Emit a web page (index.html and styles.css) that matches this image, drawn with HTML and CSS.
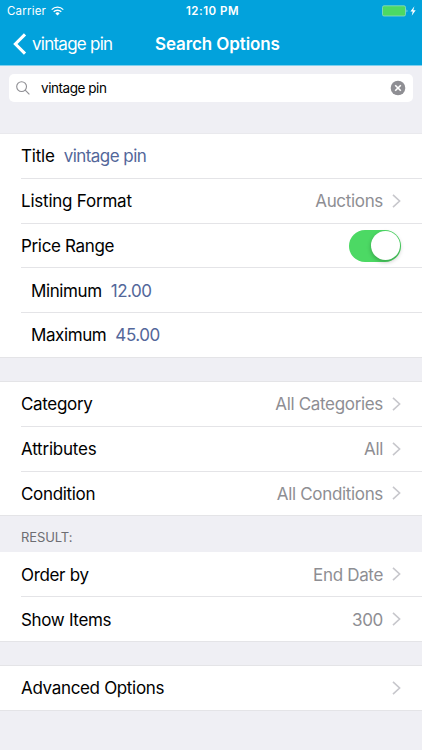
FILE: index.html
```html
<!DOCTYPE html>
<html lang="en">
<head>
    <meta charset="UTF-8">
    <meta name="viewport" content="width=device-width, initial-scale=1.0">
    <title>Search Options</title>
    <link rel="stylesheet" href="styles.css">
</head>
<body>
    <header class="header">
        <div class="status-bar">
            <div class="carrier">
                <span>Carrier</span>
                <svg class="wifi" width="13" height="10" viewBox="0 0 13 10" fill="none" stroke="#fff" stroke-width="1.3">
                    <path d="M0.7 3.6a8.2 8.2 0 0 1 11.6 0M2.7 5.8a5.4 5.4 0 0 1 7.6 0"/>
                    <path d="M6.5 9.5L4.4 7.4a3 3 0 0 1 4.2 0z" fill="#fff" stroke="none"/>
                </svg>
            </div>
            <div class="time">12:10 PM</div>
            <div class="power">
                <svg width="35" height="12" viewBox="0 0 35 12">
                    <rect x="0.5" y="0.8" width="23" height="10.2" rx="1.5" fill="#4cd964" stroke="#8fdcc0" stroke-width="0.8"/>
                    <path d="M24.7 4.2q1.5 1.6 0 3.4z" fill="#c9f0e0"/>
                    <path d="M32.4 1.2L28.4 6.5h2.3l-1 4.2 4-5.4h-2.4z" fill="#fff"/>
                </svg>
            </div>
        </div>
        <nav class="nav-bar">
            <a class="back">
                <svg width="14" height="22" viewBox="0 0 14 22" fill="none" stroke="#fff" stroke-width="3.1">
                    <path d="M12 1.4L2.4 11 12 20.6"/>
                </svg>
                <span>vintage pin</span>
            </a>
            <h1>Search Options</h1>
        </nav>
    </header>

    <div class="search">
        <div class="search-field">
            <svg width="14" height="14" viewBox="0 0 14 14" fill="none" stroke="#8e8e93" stroke-width="1.1">
                <circle cx="5.6" cy="5.6" r="4.9"/>
                <path d="M9.2 9.2l4.2 4.2"/>
            </svg>
            <span>vintage pin</span>
            <svg class="clear" width="16" height="16" viewBox="0 0 16 16">
                <circle cx="8" cy="8" r="7.3" fill="#8e8e93"/>
                <path d="M5.2 5.2l5.6 5.6M10.8 5.2l-5.6 5.6" stroke="#fff" stroke-width="1.6"/>
            </svg>
        </div>
    </div>

    <svg class="defs" width="0" height="0">
        <symbol id="chevron" viewBox="0 0 9 14">
            <path d="M1 0.8L7.6 7 1 13.2" fill="none" stroke="#c7c7cc" stroke-width="1.6"/>
        </symbol>
    </svg>

    <section class="group">
        <div class="row">
            <span class="label title">Title</span>
            <span class="input">vintage pin</span>
        </div>
        <div class="row">
            <span class="label format">Listing Format</span>
            <span class="value">Auctions</span>
            <svg class="chevron"><use href="#chevron"/></svg>
        </div>
        <div class="row">
            <span class="label">Price Range</span>
            <span class="switch"></span>
        </div>
        <div class="row sub">
            <span class="label">Minimum</span>
            <span class="input">12.00</span>
        </div>
        <div class="row sub">
            <span class="label">Maximum</span>
            <span class="input">45.00</span>
        </div>
    </section>

    <section class="group spaced">
        <div class="row">
            <span class="label">Category</span>
            <span class="value">All Categories</span>
            <svg class="chevron"><use href="#chevron"/></svg>
        </div>
        <div class="row">
            <span class="label format">Attributes</span>
            <span class="value">All</span>
            <svg class="chevron"><use href="#chevron"/></svg>
        </div>
        <div class="row">
            <span class="label">Condition</span>
            <span class="value">All Conditions</span>
            <svg class="chevron"><use href="#chevron"/></svg>
        </div>
    </section>

    <h2>RESULT:</h2>
    <section class="group">
        <div class="row">
            <span class="label">Order by</span>
            <span class="value">End Date</span>
            <svg class="chevron"><use href="#chevron"/></svg>
        </div>
        <div class="row">
            <span class="label">Show Items</span>
            <span class="value">300</span>
            <svg class="chevron"><use href="#chevron"/></svg>
        </div>
    </section>

    <section class="group spaced last">
        <div class="row">
            <span class="label">Advanced Options</span>
            <svg class="chevron"><use href="#chevron"/></svg>
        </div>
    </section>
</body>
</html>
```
FILE: styles.css
```css
* {
    box-sizing: border-box;
}
body {
    margin: 0;
    height: 750px;
    overflow: hidden;
    background: #efeff4;
    color: #000;
    font-family: Inter, "Liberation Sans", sans-serif;
    font-size: 17px;
    letter-spacing: -0.33px;
}
svg {
    display: block;
    flex: none;
}
.defs {
    position: absolute;
}
.header {
    height: 66px;
    background: #02a2dc;
    border-bottom: 1px solid #7fd0ee;
    color: #fff;
}
.status-bar {
    display: grid;
    grid-template-columns: 1fr auto 1fr;
    align-items: center;
    height: 22px;
    padding: 0 5px 0 7px;
    font-size: 11.5px;
    letter-spacing: 0.2px;
}
.carrier {
    display: flex;
    align-items: center;
    gap: 5px;
}
.time {
    margin-left: 1px;
    font-weight: 600;
    letter-spacing: 0.5px;
}
.power {
    justify-self: end;
}
.nav-bar {
    display: grid;
    grid-template-columns: 155px 1fr;
    align-items: center;
    height: 43px;
    padding-left: 13px;
}
.back {
    display: flex;
    align-items: center;
    gap: 5px;
    letter-spacing: -0.75px;
}
h1 {
    margin: 0 0 0 -13px;
    font-size: 17px;
    font-weight: 600;
    letter-spacing: -0.1px;
}
.search {
    height: 68.4px;
    padding: 8px 9px;
    border-bottom: 1px solid #e9e9ed;
}
.search-field {
    display: flex;
    align-items: center;
    height: 28px;
    padding: 0 7px;
    background: #fff;
    border-radius: 5px;
    font-size: 13.5px;
    letter-spacing: -0.45px;
}
.search-field span {
    margin-left: 11px;
}
.clear {
    margin-left: auto;
}
.group {
    background: #fff;
}
.spaced {
    margin-top: 23.3px;
    border-top: 1px solid #e4e4e7;
}
.row {
    display: flex;
    align-items: center;
    height: 44.7px;
    margin-left: 21px;
    padding-top: 1px;
    padding-right: 21px;
    border-bottom: 1px solid #e4e4e7;
}
.row:first-child:not(:last-child),
.last .row {
    padding-top: 0.5px;
}
.row:last-child {
    margin-left: 0;
    padding-left: 21px;
}
.row.sub {
    padding-left: 10px;
}
.row.sub:last-child {
    padding-left: 31px;
}
.sub .label {
    letter-spacing: -0.4px;
}
.title {
    letter-spacing: -0.2px;
}
.format {
    letter-spacing: -0.22px;
}
.input {
    margin-left: 9px;
    color: #53679a;
    letter-spacing: -0.45px;
}
.title + .input {
    letter-spacing: -0.55px;
}
.value {
    margin-left: auto;
    color: #8e8e93;
}
.chevron {
    width: 9px;
    height: 14px;
    margin-left: 9px;
    margin-bottom: 1px;
}
.label + .chevron {
    margin-left: auto;
}
.switch {
    width: 52px;
    height: 32px;
    margin-left: auto;
    margin-bottom: 1px;
    padding: 1.5px;
    border-radius: 16px;
    background: #4cd964;
}
.switch::after {
    content: "";
    display: block;
    width: 29px;
    height: 29px;
    margin-left: auto;
    border-radius: 50%;
    background: #fff;
    box-shadow: 0 2px 4px rgba(0, 0, 0, 0.25);
}
h2 {
    height: 36.3px;
    margin: 0;
    padding: 12.5px 21px 0;
    color: #6d6d72;
    font-size: 13px;
    font-weight: 400;
    line-height: 17px;
    letter-spacing: -0.1px;
}
```
